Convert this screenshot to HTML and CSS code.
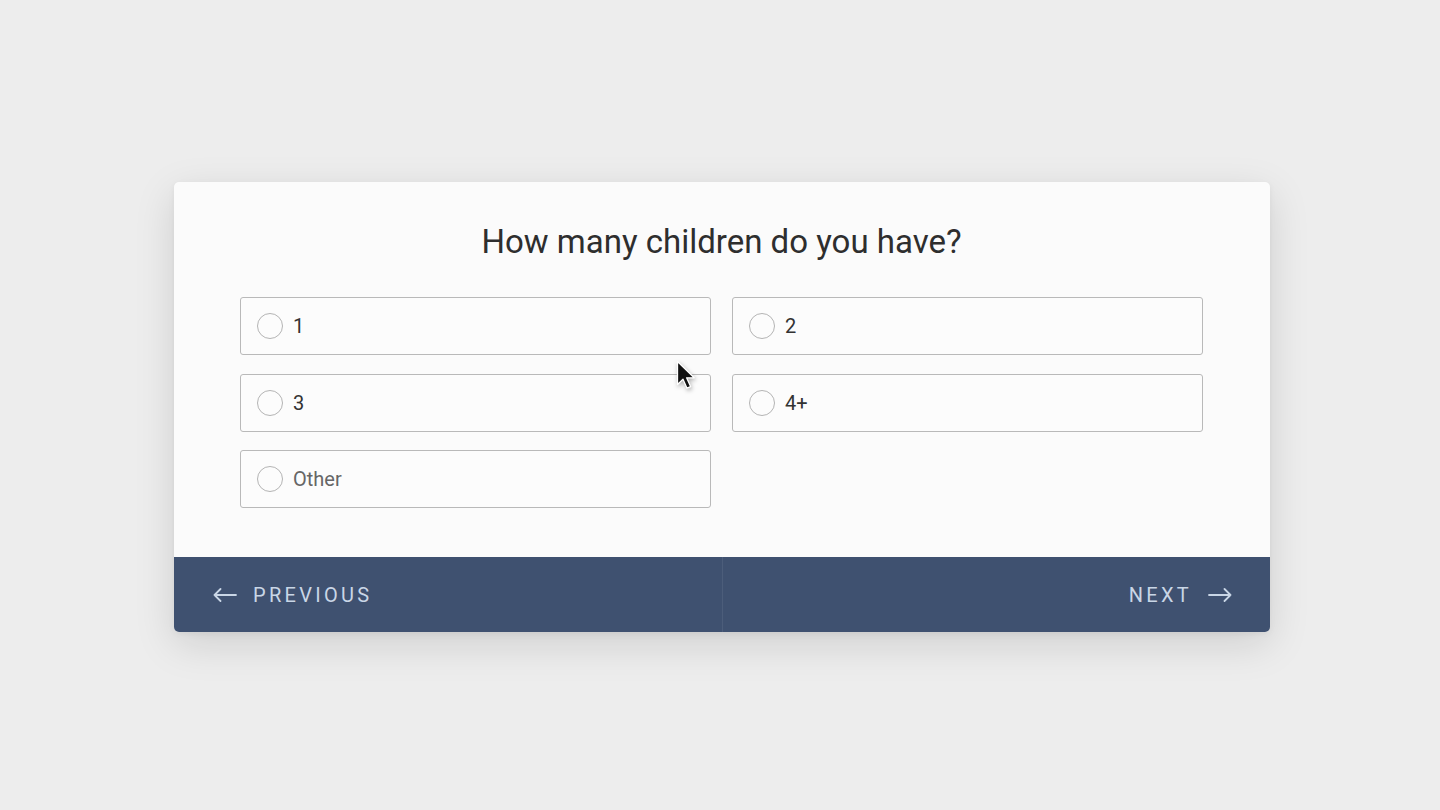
FILE: index.html
```html
<!DOCTYPE html>
<html lang="en">
<head>
  <meta charset="UTF-8">
  <meta name="viewport" content="width=device-width, initial-scale=1.0">
  <title>Survey Question</title>
  <link rel="stylesheet" href="styles.css">
</head>
<body>
  <div class="survey-card">
    <div class="question">
      <h1>How many children do you have?</h1>

      <div class="options">
        <label class="option"><span class="radio"></span><span class="label">1</span></label>
        <label class="option"><span class="radio"></span><span class="label">2</span></label>
        <label class="option"><span class="radio"></span><span class="label">3</span></label>
        <label class="option"><span class="radio"></span><span class="label">4+</span></label>
        <label class="option other"><span class="radio"></span><span class="label">Other</span></label>
      </div>
    </div>

    <div class="nav-bar">
      <button class="nav-btn prev">
        <svg width="24" height="14" viewBox="0 0 24 14" fill="none" stroke="currentColor" stroke-width="1.8" stroke-linecap="round" stroke-linejoin="round">
          <path d="M23 7H1.5M7.5 1L1.5 7l6 6"/>
        </svg>
        PREVIOUS
      </button>
      <button class="nav-btn next">
        NEXT
        <svg width="24" height="14" viewBox="0 0 24 14" fill="none" stroke="currentColor" stroke-width="1.8" stroke-linecap="round" stroke-linejoin="round">
          <path d="M1 7h21.5M16.5 1l6 6-6 6"/>
        </svg>
      </button>
    </div>

    <!-- mouse pointer over the options -->
    <svg class="cursor" width="20" height="30" viewBox="0 0 20 30">
      <path d="M1.5 1.5v23l5.5-5.3 4 9 3.6-1.6-4-8.8h7.6z" fill="#111" stroke="#fff" stroke-width="1.3" stroke-linejoin="round"/>
    </svg>
  </div>
</body>
</html>
```

FILE: styles.css
```css
/* Global Styles */
html {
  background-color: #ededed;
}

body {
  margin: 0;
  min-height: 810px;
  box-sizing: border-box;
  font-family: Roboto, 'Liberation Sans', Arial, sans-serif;
  color: #333;
  padding: 182px 0 0 174px;
}

/* Card */
.survey-card {
  position: relative;
  width: 1096px;
  background-color: #fbfbfb;
  border-radius: 5px;
  box-shadow: 0 12px 40px rgba(0, 0, 0, 0.13), 0 2px 6px rgba(0, 0, 0, 0.05);
  overflow: hidden;
}

.question {
  padding: 41px 67px 49px 66px;
}

h1 {
  margin: 0 0 36px;
  font-size: 33px;
  line-height: 38px;
  font-weight: 400;
  text-align: center;
  color: #2e2e2e;
}

/* Options */
.options {
  display: grid;
  grid-template-columns: 1fr 1fr;
  column-gap: 21px;
  row-gap: 18.5px;
}

.option {
  display: flex;
  align-items: center;
  height: 58px;
  box-sizing: border-box;
  padding-left: 16px;
  border: 1.5px solid #b9b9b9;
  border-radius: 3px;
  background-color: #fcfcfc;
  cursor: pointer;
}

.radio {
  width: 26px;
  height: 26px;
  box-sizing: border-box;
  border: 1.5px solid #b4b4b4;
  border-radius: 50%;
  margin-right: 10px;
  flex-shrink: 0;
}

.label {
  font-size: 20px;
  color: #333;
}

.other .label {
  color: #666;
}

/* Footer navigation */
.nav-bar {
  display: flex;
  height: 75px;
  background-color: #3f5170;
}

.nav-btn {
  flex: 1;
  display: flex;
  align-items: center;
  gap: 16px;
  border: none;
  background: none;
  color: #c9d6e6;
  font-family: Roboto, 'Liberation Sans', Arial, sans-serif;
  font-size: 20px;
  letter-spacing: 3.3px;
  cursor: pointer;
}

.prev {
  padding: 0 0 0 39px;
  border-right: 1px solid rgba(255, 255, 255, 0.07);
}

.next {
  justify-content: flex-end;
  padding: 0 38px 0 0;
}

.cursor {
  position: absolute;
  left: 502px;
  top: 178px;
  filter: drop-shadow(1px 2px 2px rgba(0, 0, 0, 0.3));
}
```
